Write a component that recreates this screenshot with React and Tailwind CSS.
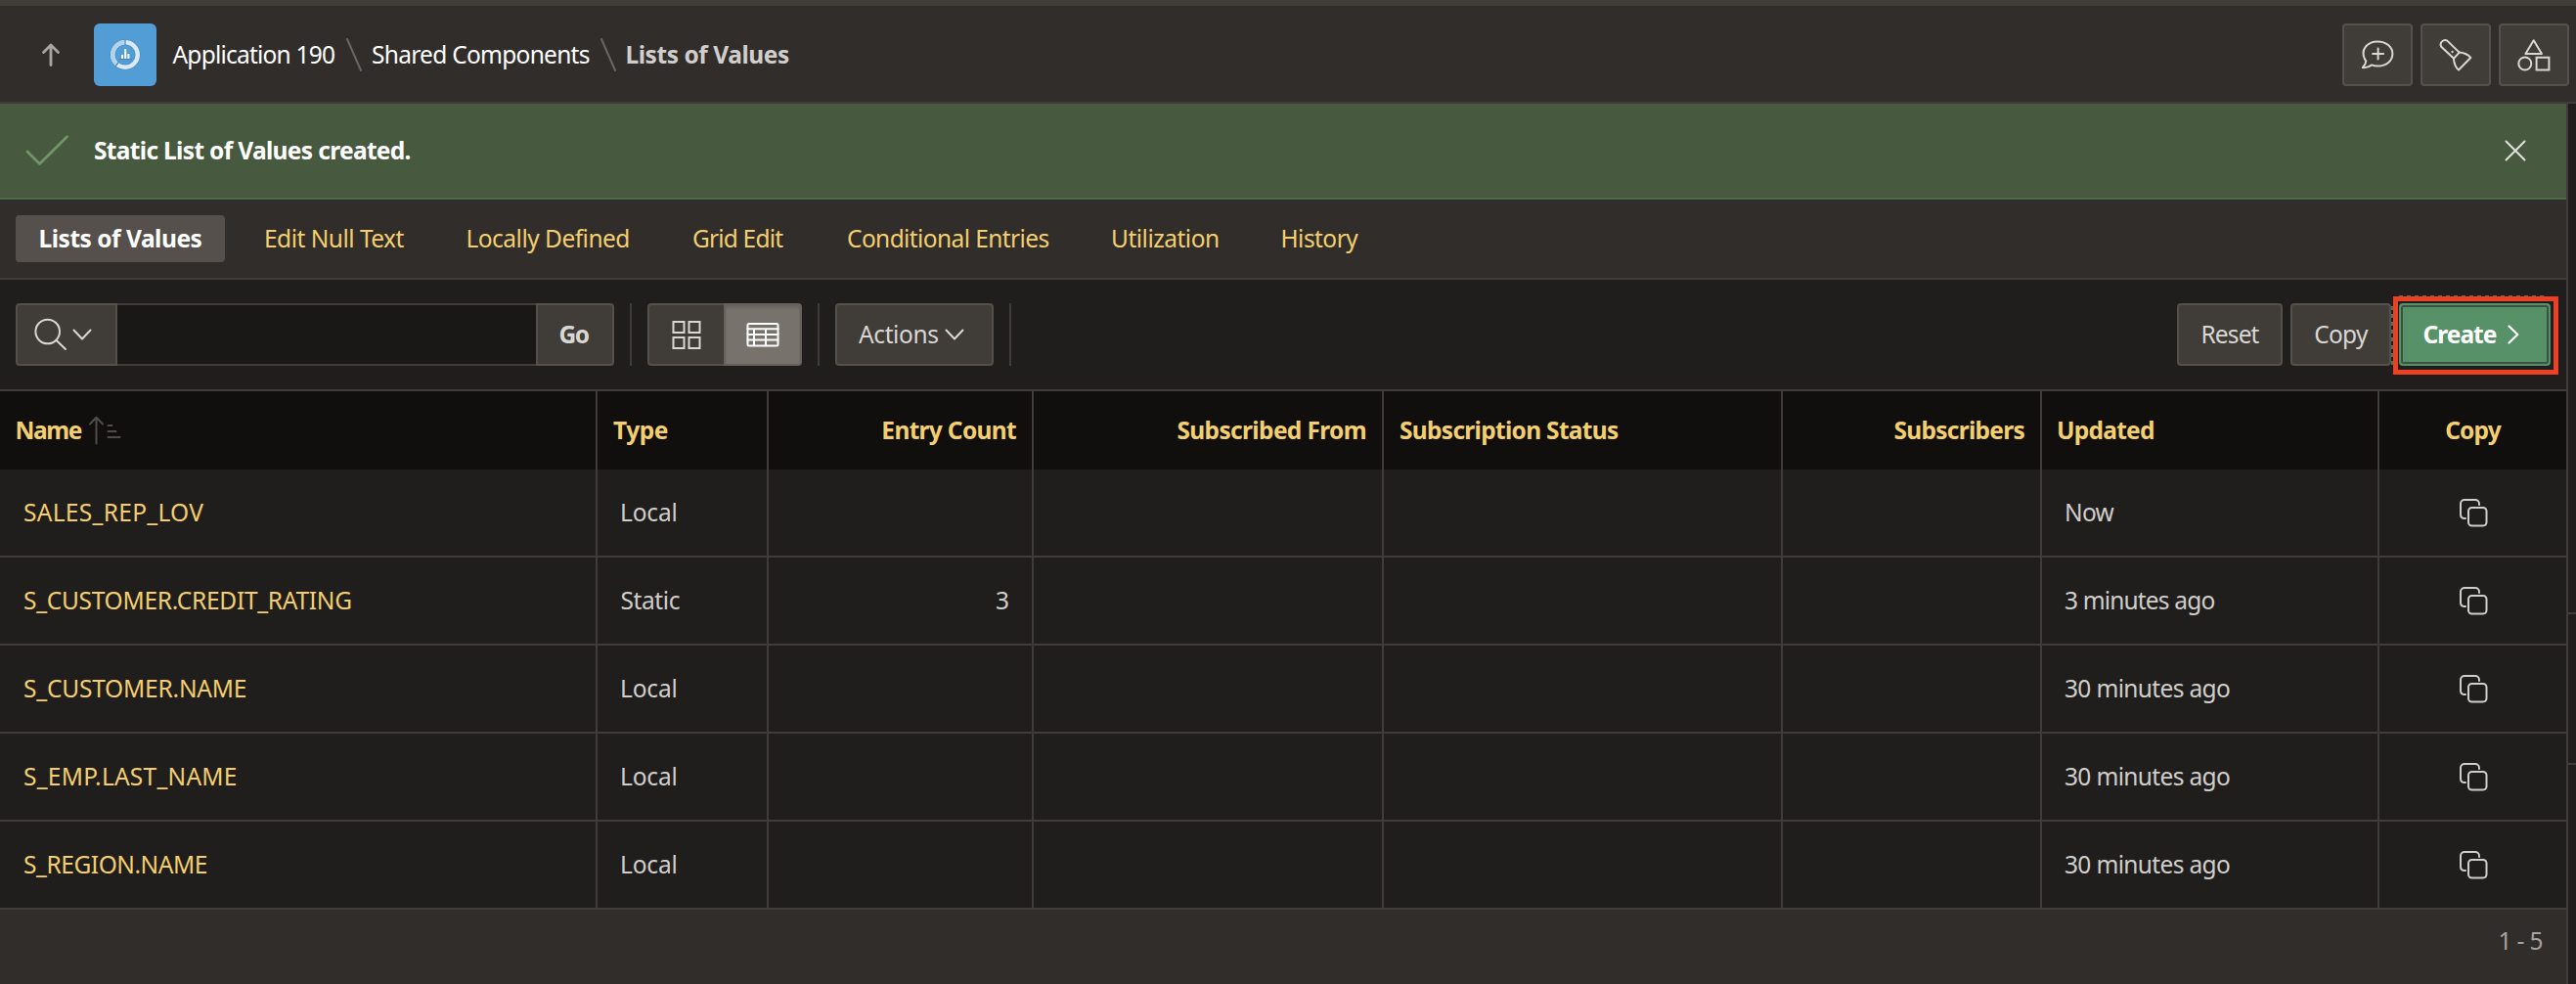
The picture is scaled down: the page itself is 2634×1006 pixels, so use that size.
import React from "react";

const button =
  "flex h-16 items-center rounded border-2 border-[#55504b] bg-[#403c38] text-[#d9d7d4]";

function Svg({ w, h, children, className = "" }) {
  return (
    <svg
      width={w}
      height={h}
      viewBox={`0 0 ${w} ${h}`}
      fill="none"
      stroke="currentColor"
      strokeWidth="2"
      strokeLinecap="round"
      strokeLinejoin="round"
      className={`shrink-0 ${className}`}
    >
      {children}
    </svg>
  );
}

function CrumbSeparator({ className }) {
  return (
    <Svg w={16} h={34} className={`text-[#6b6663] ${className}`}>
      <path d="M1 1L15 33" />
    </Svg>
  );
}

function ChevronDown() {
  return (
    <Svg w={20} h={12}>
      <path d="M1.5 1.5L10 10.5L18.5 1.5" />
    </Svg>
  );
}

function ToolSeparator() {
  return <div className="mx-4 h-16 w-0.5 bg-[#403c38]" />;
}

function Header() {
  return (
    <header className="flex h-[106px] items-center border-b-2 border-t-[6px] border-[#403c38] bg-[#312d2a] pb-0 pr-[7px] pt-0.5">
      <Svg w={20} h={24} className="ml-[42px] text-[#a8a5a2]">
        <path d="M10 22.5V3M2.5 9.5L10 2L17.5 9.5" strokeWidth="2.8" />
      </Svg>
      <div className="ml-[34px] flex h-16 w-16 items-center justify-center rounded-md bg-[#539dd6]">
        <svg width="34" height="34" viewBox="0 0 34 34" fill="none">
          <circle cx="17" cy="17" r="12.8" stroke="#468cc3" strokeWidth="5.6" />
          <circle cx="17" cy="17" r="12.8" stroke="#dbe9f5" strokeWidth="4.4" />
          <path d="M9.2 27.1A12.8 12.8 0 0 1 16.4 4.2" stroke="#b3d3ec" strokeWidth="4.4" />
          <path d="M17 1.8V7M7.3 28.6L10.4 24.4" stroke="#4588bd" strokeWidth="1.2" />
          <path d="M11 21.6H23.5" stroke="#3f82b8" strokeWidth="1" />
          <path d="M14 21V17M17.2 21V11M20.4 21V16" stroke="#fff" strokeWidth="2" />
        </svg>
      </div>
      <span className="ml-[16.5px] w-[166px] tracking-[-0.79px] text-white">Application 190</span>
      <CrumbSeparator className="ml-[11.5px]" />
      <span className="ml-2.5 w-[224px] tracking-[-0.72px] text-white">Shared Components</span>
      <CrumbSeparator className="ml-[9.5px]" />
      <span className="ml-2.5 font-bold tracking-[-0.45px] text-[#d0cecb]">Lists of Values</span>
      <div className="ml-auto flex gap-2 text-[#dddbd8]">
        <button className={`${button} w-[72px] justify-center`}>
          <Svg w={34} h={34}>
            <path d="M3.7 20.6C-.2 11.5 6.5 3.4 17 3.4C26 3.4 32.4 8.8 32.4 16C32.4 23.2 26 28.6 17.3 28.6C14.8 28.6 12.8 28.2 11.2 27.4C8.6 29.5 5 30.3 1.8 30.1C3.7 28.2 5.2 25.6 5.3 23.3Q4.3 22.2 3.7 20.6Z" />
            <path d="M17.6 10.5V21.5M12.1 16H23.1" />
          </Svg>
        </button>
        <button className={`${button} w-[72px] justify-center`}>
          <Svg w={34} h={34}>
            <path d="M20.7 14.6L8.3 2.6A4.5 4.5 0 0 0 2.2 8.7L15 20.7Z" />
            <path d="M20.7 14.6Q28.5 15.4 32.3 20L20 32.5Q15.3 28.5 15 20.7" />
            <path d="M13.6 13.9V14.2" strokeWidth="2.2" />
          </Svg>
        </button>
        <button className={`${button} w-[72px] justify-center`}>
          <Svg w={34} h={34}>
            <path d="M16.7 2.2L25 16H8.4Z" />
            <circle cx="7.8" cy="26" r="6.5" />
            <path d="M19.6 19.8H32.4V32.6H19.6Z" strokeLinejoin="miter" />
          </Svg>
        </button>
      </div>
    </header>
  );
}

function Notice() {
  return (
    <div className="flex h-[98px] items-center border-b-2 border-[#506a4c] bg-[#47593f] text-white">
      <Svg w={46} h={32} className="ml-[25px] text-[#709567]">
        <path d="M3 17L15.5 29.5L43.5 1.8" strokeWidth="2.8" />
      </Svg>
      <span className="ml-[25px] font-bold tracking-[-0.67px]">Static List of Values created.</span>
      <Svg w={22} h={22} className="ml-auto mr-[41px] text-[#e2e2de]">
        <path d="M1.5 1.5L20.5 20.5M20.5 1.5L1.5 20.5" />
      </Svg>
    </div>
  );
}

const tabs = [
  ["Edit Null Text", "w-[206.5px] tracking-[-0.51px]"],
  ["Locally Defined", "w-[231.5px] tracking-[-0.52px]"],
  ["Grid Edit", "w-[158px] tracking-[-0.82px]"],
  ["Conditional Entries", "w-[270px] tracking-[-0.6px]"],
  ["Utilization", "w-[173.5px] tracking-[-0.5px]"],
  ["History", "tracking-[-0.55px]"],
];

function Tabs() {
  return (
    <nav className="flex h-[82px] items-center border-b-2 border-[#403c38] bg-[#312d2a] pl-4 text-[#f4cf6f]">
      <div className="flex h-12 w-[214px] items-center rounded bg-[#55504b] pl-[23.5px] font-bold tracking-[-0.48px] text-white">
        Lists of Values
      </div>
      <div className="ml-10 flex">
        {tabs.map(([label, cls]) => (
          <div key={label} className={cls}>
            {label}
          </div>
        ))}
      </div>
    </nav>
  );
}

function Toolbar() {
  return (
    <div className="flex h-[114px] items-center border-b-2 border-[#403c38] pl-4 pr-4">
      <div className="flex">
        <button className={`${button} w-[104px] gap-[5px] rounded-r-none pl-[17px]`}>
          <Svg w={34} h={34}>
            <circle cx="13.7" cy="14" r="12.3" />
            <path d="M22.4 22.7L32 32" />
          </Svg>
          <ChevronDown />
        </button>
        <div className="h-16 w-[428px] border-y-2 border-[#403c38] bg-[#1a1816]" />
        <button
          className={`${button} w-20 rounded-l-none pl-[21.5px] font-bold tracking-[-1.4px]`}
        >
          Go
        </button>
      </div>
      <ToolSeparator />
      <div className="flex">
        <button className={`${button} w-[78px] justify-center rounded-r-none border-r-0`}>
          <Svg w={30} h={30}>
            <path
              d="M1.5 2H12.5V13H1.5ZM17.5 2H28.5V13H17.5ZM1.5 18H12.5V29H1.5ZM17.5 18H28.5V29H17.5Z"
              strokeLinejoin="miter"
            />
          </Svg>
        </button>
        <button className="flex h-16 w-20 items-center justify-center rounded-r border-2 border-[#67615c] bg-[#78726d] text-white shadow-[inset_0_3px_3px_rgba(0,0,0,0.12)]">
          <Svg w={34} h={26}>
            <rect x="1.5" y="2" width="31" height="22.5" rx="1.5" />
            <path d="M1.5 7.2H32.5M1.5 13H32.5M1.5 18.5H32.5M8 7.2V24M20 7.2V24" />
          </Svg>
        </button>
      </div>
      <ToolSeparator />
      <button className={`${button} w-[162px] gap-1.5 pl-[22px] tracking-[-0.38px]`}>
        Actions
        <ChevronDown />
      </button>
      <ToolSeparator />
      <div className="ml-auto flex">
        <button className={`${button} w-[108px] justify-center tracking-[-0.85px]`}>Reset</button>
        <button className={`${button} ml-2 w-[103px] justify-center tracking-[-0.78px]`}>Copy</button>
        <div className="relative ml-2">
          <button className="flex h-16 w-[155px] items-center gap-3 rounded border-2 border-[#569168] bg-[#569168] pl-[22.5px] font-bold tracking-[-0.98px] text-white shadow-[inset_0_0_0_2px_#3d5244]">
            Create
            <Svg w={12} h={20}>
              <path d="M1.5 1.5L10.3 10L1.5 18.5" strokeWidth="2.2" />
            </Svg>
          </button>
          <div className="absolute -left-1.5 -top-[7px] h-20 w-[169px] border-[5px] border-[#ec4025]" />
          <div className="absolute -top-2 left-0 h-px w-[149px] bg-[repeating-linear-gradient(90deg,#467653_0_4px,transparent_4px_8px)]" />
          <div className="absolute -left-2 top-[3px] h-[60px] w-0.5 bg-[repeating-linear-gradient(180deg,#467653_0_4px,transparent_4px_8px)]" />
        </div>
      </div>
    </div>
  );
}

const grid =
  "grid grid-cols-[611px_175px_271px_358px_408px_265px_345px_191px]";

const rows = [
  ["SALES_REP_LOV", "tracking-[0.3px]", "Local", "", "Now", ""],
  ["S_CUSTOMER.CREDIT_RATING", "tracking-[-0.28px]", "Static", "3", "3 minutes ago", "tracking-[-0.84px]"],
  ["S_CUSTOMER.NAME", "tracking-[-0.2px]", "Local", "", "30 minutes ago", "tracking-[-0.66px]"],
  ["S_EMP.LAST_NAME", "tracking-[0.25px]", "Local", "", "30 minutes ago", "tracking-[-0.66px]"],
  ["S_REGION.NAME", "tracking-[-0.45px]", "Local", "", "30 minutes ago", "tracking-[-0.66px]"],
];

function Cell({ className = "", children }) {
  return (
    <div className={`flex items-center border-r-2 border-[#403c38] last:border-r-0 ${className}`}>
      {children}
    </div>
  );
}

function Table() {
  return (
    <div>
      <div className={`${grid} h-20 bg-[#100f0d] font-bold text-[#f4cf6f]`}>
        <Cell className="pl-[15.5px]">
          <span className="w-[74.5px] tracking-[-1.4px]">Name</span>
          <Svg w={36} h={30} className="text-[#4f4c49]">
            <path d="M8.5 28.5V2M2 8.5L8.5 1.8L15 8.5" />
            <path d="M20.5 10H24.5M20.5 16H28.5M20.5 22H32.5" />
          </Svg>
        </Cell>
        <Cell className="pl-4 tracking-[-0.45px]">Type</Cell>
        <Cell className="justify-end pr-4 tracking-[-0.68px]">Entry Count</Cell>
        <Cell className="justify-end pr-4 tracking-[-0.64px]">Subscribed From</Cell>
        <Cell className="pl-4 tracking-[-0.7px]">Subscription Status</Cell>
        <Cell className="justify-end pr-4 tracking-[-0.72px]">Subscribers</Cell>
        <Cell className="pl-[15px] tracking-[-0.75px]">Updated</Cell>
        <Cell className="justify-center tracking-[-0.83px]">Copy</Cell>
      </div>
      {rows.map(([name, nameCls, type, count, updated, updatedCls]) => (
        <div key={name} className={`${grid} h-[90px] border-b-2 border-[#403c38] text-[#d0cecb]`}>
          <Cell className={`pl-6 text-[#f4cf6f] ${nameCls}`}>{name}</Cell>
          <Cell className={type === "Static" ? "pl-[23.5px] tracking-[-0.4px]" : "pl-[23px] tracking-[-0.15px]"}>
            {type}
          </Cell>
          <Cell className="justify-end pr-[23px]">{count}</Cell>
          <Cell />
          <Cell />
          <Cell />
          <Cell className={`pl-[23px] ${updatedCls || "tracking-[-0.7px]"}`}>{updated}</Cell>
          <Cell className="justify-center">
            <Svg w={30} h={30}>
              <path d="M7 21H5.5A4 4 0 0 1 2 17V6A4 4 0 0 1 6 2H17A4 4 0 0 1 21 6V7" />
              <rect x="10" y="10" width="18.5" height="18.5" rx="3.5" />
            </Svg>
          </Cell>
        </div>
      ))}
    </div>
  );
}

export default function App() {
  return (
    <div className="flex h-[1006px] w-[2634px] flex-col overflow-hidden whitespace-nowrap bg-[#201e1c] font-['Noto_Sans',sans-serif] text-[24.5px] leading-8">
      <Header />
      <div className="flex flex-1">
        <main className="flex w-[2626px] flex-col border-r-2 border-[#403c38]">
          <Notice />
          <Tabs />
          <Toolbar />
          <Table />
          <footer className="flex flex-1 items-start justify-end bg-[#312d2a] pr-6 pt-4 tracking-[-0.63px] text-[#a5a29f]">
            1 - 5
          </footer>
        </main>
        <aside className="w-2">
          <div className="h-[522px] border-b-2 border-[#403c38]" />
          <div className="h-[154px] border-b-2 border-[#403c38]" />
        </aside>
      </div>
    </div>
  );
}
